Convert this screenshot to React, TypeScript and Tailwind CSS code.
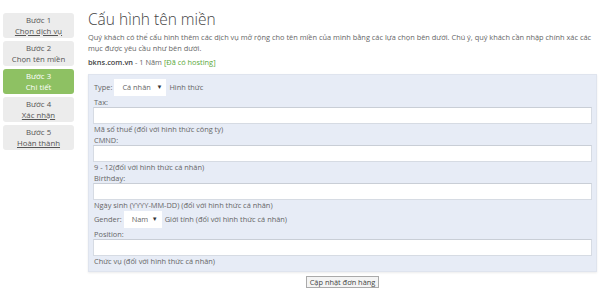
import React from "react";

const font = { fontFamily: '"Open Sans", "Noto Sans", sans-serif' };

function Step({ n, label, active, link }: { n: number; label: string; active?: boolean; link?: boolean }) {
  return (
    <div
      className={`h-[25px] rounded-[3px] flex flex-col items-center justify-center text-[7.8px] leading-[10.5px] ${
        active ? "bg-[#8ec163] text-white" : "bg-[#ececec] text-[#555]"
      }`}
    >
      <div>Bước {n}</div>
      <div className={link ? "underline" : ""}>{label}</div>
    </div>
  );
}

function Input() {
  return <div className="h-[17px] bg-white border border-[#d6dbe3] border-t-[#c9ced6]" />;
}

function Select({ text, w }: { text: string; w: string }) {
  return (
    <div className={`${w} h-[17px] bg-white flex items-center justify-between pl-[8px] pr-[4px] text-[#666]`}>
      <span>{text}</span>
      <span className="text-[6px] text-[#333]">▼</span>
    </div>
  );
}

export default function App() {
  return (
    <div className="w-[600px] h-[291px] bg-white text-[#555] flex" style={font}>
      <div className="w-[71px] ml-[3px] mt-[13px] flex flex-col gap-[3px]">
        <Step n={1} label="Chọn dịch vụ" link />
        <Step n={2} label="Chọn tên miền" />
        <Step n={3} label="Chi tiết" active />
        <Step n={4} label="Xác nhận" link />
        <Step n={5} label="Hoàn thành" link />
      </div>
      <div className="ml-[14px] w-[509px] flex flex-col">
        <h1 className="mt-[9px] text-[15.5px] leading-[20px] font-light text-[#444]">Cấu hình tên miền</h1>
        <p className="mt-[3px] text-[7.4px] leading-[10.5px] text-[#666]">
          Quý khách có thể cấu hình thêm các dịch vụ mở rộng cho tên miền của mình bằng các lựa chọn bên dưới. Chú ý, quý khách cần nhập chính xác các mục được yêu cầu như bên dưới.
        </p>
        <div className="mt-[4px] text-[7.4px] leading-[10.5px] text-[#666]">
          <span className="font-semibold text-[#444]">bkns.com.vn</span> - 1 Năm{" "}
          <span className="text-[#5aa83a]">[Đã có hosting]</span>
        </div>
        <div className="mt-[6px] bg-[#e7ecf6] border border-[#dfe4ee] shadow-[0_1px_2px_rgba(0,0,0,0.08)] px-[4px] pt-[4px] pb-[4px] text-[7.4px] leading-[10.5px] text-[#666]">
          <div className="flex items-center gap-[2px] h-[18px]">
            <span className="pl-[1px]">Type:</span>
            <Select text="Cá nhân" w="w-[52px]" />
            <span className="ml-[1px]">Hình thức</span>
          </div>
          <div className="pl-[1px]">Tax:</div>
          <Input />
          <div className="pl-[1px]">Mã số thuế (đối với hình thức công ty)</div>
          <div className="pl-[1px]">CMND:</div>
          <Input />
          <div className="pl-[1px]">9 - 12(đối với hình thức cá nhân)</div>
          <div className="pl-[1px]">Birthday:</div>
          <Input />
          <div className="pl-[1px]">Ngày sinh (YYYY-MM-DD) (đối với hình thức cá nhân)</div>
          <div className="flex items-center gap-[2px] h-[18px]">
            <span className="pl-[1px]">Gender:</span>
            <Select text="Nam" w="w-[38px]" />
            <span className="ml-[1px]">Giới tính (đối với hình thức cá nhân)</span>
          </div>
          <div className="pl-[1px]">Position:</div>
          <Input />
          <div className="pl-[1px]">Chức vụ (đối với hình thức cá nhân)</div>
        </div>
        <div className="flex justify-center mt-[4px]">
          <button className="h-[12px] px-[3px] bg-[#f4f4f4] border border-[#aaa] text-[7.4px] leading-[10px] text-[#444]">
            Cập nhật đơn hàng
          </button>
        </div>
      </div>
    </div>
  );
}
